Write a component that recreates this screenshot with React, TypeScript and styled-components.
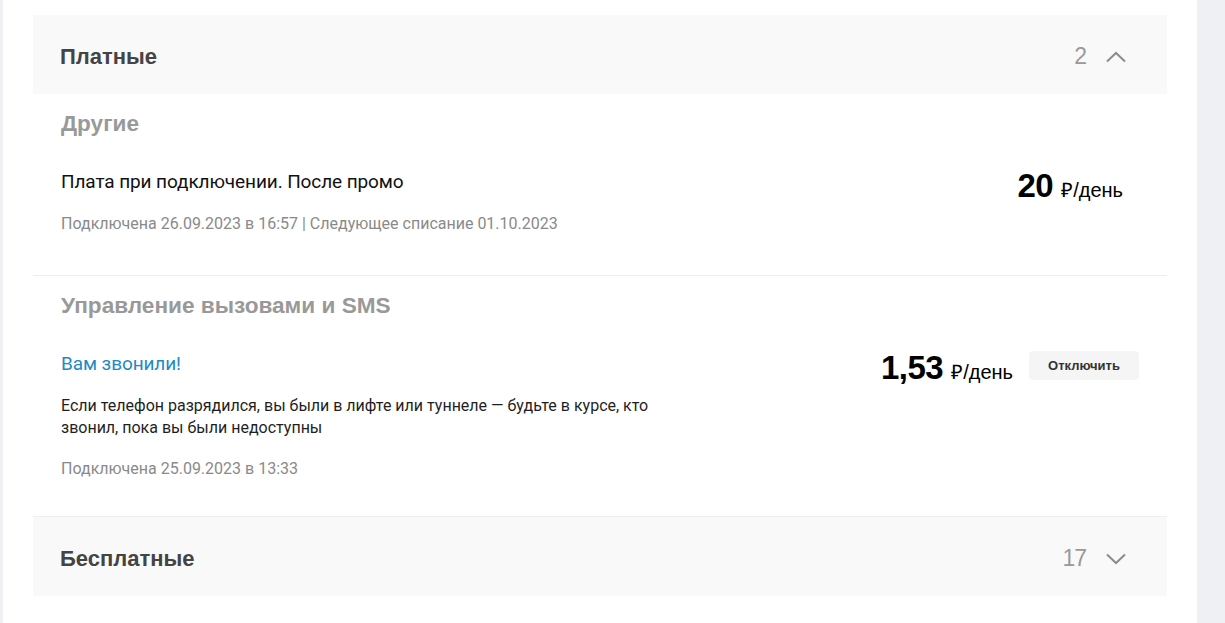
import styled, { createGlobalStyle } from 'styled-components'

const GlobalStyle = createGlobalStyle`
  html, body {
    margin: 0;
    padding: 0;
    background: #eff0f4;
  }
  * {
    box-sizing: border-box;
  }
`

const Page = styled.div`
  display: flex;
  width: 1225px;
  height: 623px;
  padding-left: 3px;
  background: #eff0f4;
  overflow: hidden;
`

const Card = styled.div`
  width: 1194px;
  background: #fff;
  padding: 15px 30px 0 30px;
`

const Header = styled.div`
  display: flex;
  align-items: center;
  height: 79px;
  padding: 4px 41px 0 27px;
  background: #f9f9f9;
`

const HeaderTitle = styled.h2`
  flex: 1;
  margin: 0;
  color: #444;
  font-family: 'Liberation Sans', Arial, sans-serif;
  font-size: 22px;
  font-weight: 700;
`

const Count = styled.span`
  color: #999;
  font-family: 'Liberation Sans', Arial, sans-serif;
  font-size: 23px;
  font-weight: 400;
  letter-spacing: -1px;
  margin-right: 20px;
`

const Chevron = ({ up }: { up?: boolean }) => (
  <svg width="20" height="12" viewBox="0 0 20 12" fill="none">
    <path
      d={up ? 'M1 10.5 L10 2 L19 10.5' : 'M1 1.5 L10 10 L19 1.5'}
      stroke="#8c8c8c"
      strokeWidth="2"
    />
  </svg>
)

const Group = styled.div`
  padding: 17px 28px 0 28px;
  border-bottom: 1px solid #eeeeee;
`

const GroupTitle = styled.h3`
  margin: 0;
  color: #999;
  font-family: 'Liberation Sans', Arial, sans-serif;
  font-size: 22.6px;
  font-weight: 700;
  line-height: 26px;
`

const Item = styled.div<{ $pb: number }>`
  display: flex;
  align-items: flex-start;
  padding: 33px 0 ${({ $pb }) => $pb}px 0;
`

const ItemBody = styled.div`
  flex: 1;
  max-width: 620px;
`

const ItemName = styled.div<{ $link?: boolean }>`
  color: ${({ $link }) => ($link ? '#1d8ac5' : '#111')};
  font-family: Roboto, 'Liberation Sans', sans-serif;
  font-size: 19px;
  line-height: 24px;
  letter-spacing: -0.1px;
`

const ItemText = styled.div`
  margin-top: 19px;
  color: #1f1f1f;
  font-family: Roboto, 'Liberation Sans', sans-serif;
  font-size: 16px;
  line-height: 22px;
`

const Meta = styled.div`
  margin-top: 19px;
  color: #8a8a8a;
  font-family: Roboto, 'Liberation Sans', sans-serif;
  font-size: 16px;
  line-height: 22px;
`

const Side = styled.div<{ $pr: number }>`
  display: flex;
  align-items: center;
  gap: 16px;
  height: 36px;
  margin-top: 1px;
  margin-left: auto;
  padding-right: ${({ $pr }) => $pr}px;
`

const Price = styled.div`
  color: #000;
  font-family: 'Liberation Sans', Arial, sans-serif;
  line-height: 36px;
  white-space: nowrap;
`

const Amount = styled.span`
  font-size: 33px;
  font-weight: 700;
  letter-spacing: -0.5px;
  margin-right: 8px;
`

const Unit = styled.span`
  font-size: 20px;
`

const OffButton = styled.button`
  width: 110px;
  height: 29px;
  margin-top: -12px;
  padding: 0;
  border: none;
  border-radius: 4px;
  background: #f5f5f5;
  color: #333;
  font-family: 'Liberation Sans', Arial, sans-serif;
  font-size: 13px;
  font-weight: 700;
  cursor: pointer;
`

export default function App() {
  return (
    <>
      <GlobalStyle />
      <Page>
        <Card>
          <Header>
            <HeaderTitle>Платные</HeaderTitle>
            <Count>2</Count>
            <Chevron up />
          </Header>
          <Group>
            <GroupTitle>Другие</GroupTitle>
            <Item $pb={40}>
              <ItemBody>
                <ItemName>Плата при подключении. После промо</ItemName>
                <Meta>Подключена 26.09.2023 в 16:57 | Следующее списание 01.10.2023</Meta>
              </ItemBody>
              <Side $pr={16}>
                <Price>
                  <Amount>20</Amount>
                  <Unit>₽/день</Unit>
                </Price>
              </Side>
            </Item>
          </Group>
          <Group>
            <GroupTitle>Управление вызовами и SMS</GroupTitle>
            <Item $pb={36}>
              <ItemBody>
                <ItemName $link>Вам звонили!</ItemName>
                <ItemText>
                  Если телефон разрядился, вы были в лифте или туннеле — будьте в курсе, кто
                  звонил, пока вы были недоступны
                </ItemText>
                <Meta>Подключена 25.09.2023 в 13:33</Meta>
              </ItemBody>
              <Side $pr={0}>
                <Price>
                  <Amount>1,53</Amount>
                  <Unit>₽/день</Unit>
                </Price>
                <OffButton>Отключить</OffButton>
              </Side>
            </Item>
          </Group>
          <Header>
            <HeaderTitle>Бесплатные</HeaderTitle>
            <Count>17</Count>
            <Chevron />
          </Header>
        </Card>
      </Page>
    </>
  )
}
